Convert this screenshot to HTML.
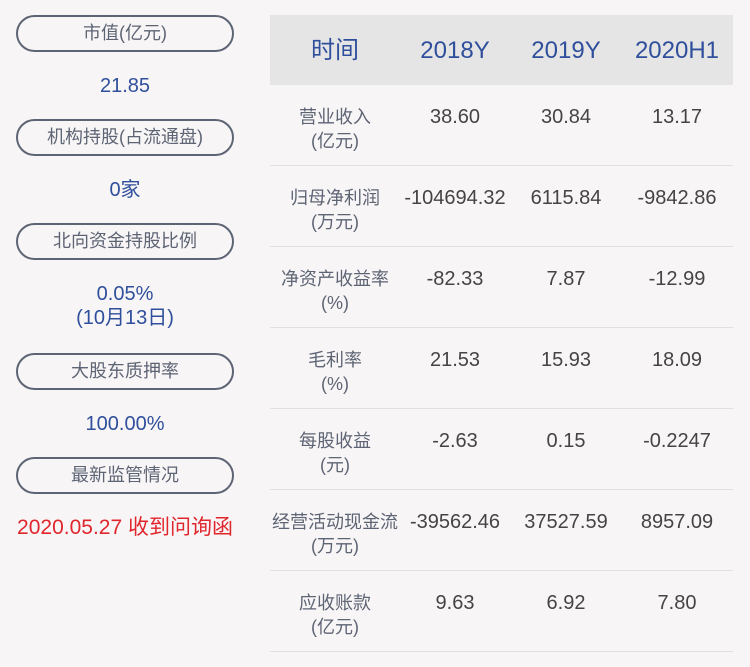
<!DOCTYPE html>
<html><head><meta charset="utf-8"><style>
body{margin:0;width:750px;height:667px;background:#f8f5f6;font-family:"Liberation Sans","Noto Sans CJK SC",sans-serif;position:relative;overflow:hidden}
.pill{position:absolute;left:16px;width:214px;height:33px;border:2px solid #5d6474;border-radius:19px;text-align:center;line-height:33px;font-size:18px;color:#5d6474}
.v{position:absolute;left:0;width:250px;text-align:center;font-size:20px;color:#2f4f9c;line-height:24px}
.hd{position:absolute;left:270px;top:15px;width:463px;height:70px;background:#e5e5e5}
.h{position:absolute;top:36px;font-size:24px;color:#2f4f9c;text-align:center;width:120px;line-height:30px}
.row{position:absolute;left:270px;width:463px;height:80px;border-bottom:1px solid #e2e0e1}
.lb{position:absolute;left:0;width:130px;top:20px;text-align:center;font-size:18px;color:#5d6474;line-height:24px}
.c{position:absolute;top:20px;width:120px;text-align:center;font-size:20px;color:#444;line-height:24px}
</style></head><body>
<div class="pill" style="top:15px">市值(亿元)</div>
<div class="v" style="top:74px">21.85</div>
<div class="pill" style="top:119px">机构持股(占流通盘)</div>
<div class="v" style="top:178px">0家</div>
<div class="pill" style="top:223px">北向资金持股比例</div>
<div class="v" style="top:282px">0.05%<br>(10月13日)</div>
<div class="pill" style="top:353px">大股东质押率</div>
<div class="v" style="top:412px">100.00%</div>
<div class="pill" style="top:457px">最新监管情况</div>
<div class="v" style="top:516px;color:#e0262d;font-size:21px">2020.05.27 收到问询函</div>

<div class="hd"></div>
<div class="h" style="left:275px">时间</div>
<div class="h" style="left:395px">2018Y</div>
<div class="h" style="left:506px">2019Y</div>
<div class="h" style="left:617px">2020H1</div>

<div class="row" style="top:85px"><div class="lb">营业收入<br>(亿元)</div><div class="c" style="left:125px">38.60</div><div class="c" style="left:236px">30.84</div><div class="c" style="left:347px">13.17</div></div>
<div class="row" style="top:166px"><div class="lb">归母净利润<br>(万元)</div><div class="c" style="left:125px">-104694.32</div><div class="c" style="left:236px">6115.84</div><div class="c" style="left:347px">-9842.86</div></div>
<div class="row" style="top:247px"><div class="lb">净资产收益率<br>(%)</div><div class="c" style="left:125px">-82.33</div><div class="c" style="left:236px">7.87</div><div class="c" style="left:347px">-12.99</div></div>
<div class="row" style="top:328px"><div class="lb">毛利率<br>(%)</div><div class="c" style="left:125px">21.53</div><div class="c" style="left:236px">15.93</div><div class="c" style="left:347px">18.09</div></div>
<div class="row" style="top:409px"><div class="lb">每股收益<br>(元)</div><div class="c" style="left:125px">-2.63</div><div class="c" style="left:236px">0.15</div><div class="c" style="left:347px">-0.2247</div></div>
<div class="row" style="top:490px"><div class="lb" style="left:-3px;width:136px">经营活动现金流<br>(万元)</div><div class="c" style="left:125px">-39562.46</div><div class="c" style="left:236px">37527.59</div><div class="c" style="left:347px">8957.09</div></div>
<div class="row" style="top:571px"><div class="lb">应收账款<br>(亿元)</div><div class="c" style="left:125px">9.63</div><div class="c" style="left:236px">6.92</div><div class="c" style="left:347px">7.80</div></div>
</body></html>
